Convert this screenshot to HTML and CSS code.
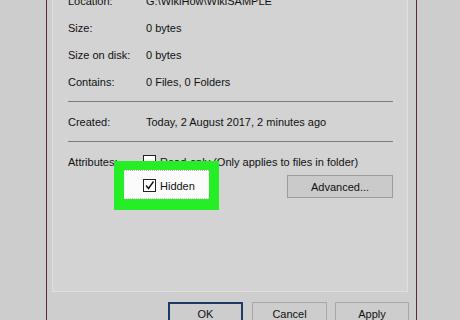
FILE: index.html
```html
<!DOCTYPE html>
<html lang="en">
<head>
    <meta charset="UTF-8">
    <title>WikiSAMPLE Properties</title>
    <link rel="stylesheet" href="styles.css">
</head>
<body>
<div class="window">
    <div class="panel">
        <div class="row"><span class="label">Location:</span><span>G:\WikiHow\WikiSAMPLE</span></div>
        <div class="row"><span class="label">Size:</span><span>0 bytes</span></div>
        <div class="row"><span class="label">Size on disk:</span><span>0 bytes</span></div>
        <div class="row"><span class="label">Contains:</span><span>0 Files, 0 Folders</span></div>

        <hr class="sep">

        <div class="row"><span class="label">Created:</span><span>Today, 2 August 2017, 2 minutes ago</span></div>

        <hr class="sep">

        <div class="row">
            <span class="label attr-label">Attributes:</span>
            <span class="check"></span>
            <span>Read-only (Only applies to files in folder)</span>
        </div>
        <div class="hidden-row">
            <label class="highlight">
                <span class="check">
                    <svg width="11" height="11" viewBox="0 0 11 11"><path d="M2 5.5 L4.5 8.5 L9.5 1.5" fill="none" stroke="#111" stroke-width="1.4"/></svg>
                </span>
                Hidden
            </label>
            <button class="btn advanced">Advanced...</button>
        </div>
    </div>

    <div class="actions">
        <button class="btn btn-ok">OK</button>
        <button class="btn btn-cancel">Cancel</button>
        <button class="btn btn-apply">Apply</button>
    </div>
</div>
</body>
</html>
```

FILE: styles.css
```css
body {
    margin: 0;
    padding: 0;
    background-color: #cdcdcd;
    font-family: "Liberation Sans", Arial, sans-serif;
    font-size: 11px;
    color: #111;
    overflow: hidden;
}
.window {
    margin-left: 46px;
    width: 356px;
    height: 360px;
    padding: 0 8px 0 5px;
    background-color: #cecece;
    border-left: 1px solid #5a2a3a;
    border-right: 1px solid #5a2a3a;
}
.panel {
    margin-top: -30px;
    padding: 16px 14px 92px 15px;
    background-color: #d3d3d3;
    border: 1px solid #dfdfdf;
}
.row {
    display: flex;
    align-items: center;
    height: 27px;
    white-space: nowrap;
}
.label {
    width: 78px;
    flex-shrink: 0;
}
.attr-label {
    width: 75px;
}
.sep {
    margin: 6px 0;
    border: none;
    height: 1px;
    background-color: #7d7d7d;
}
.check {
    display: inline-flex;
    align-items: center;
    justify-content: center;
    width: 11px;
    height: 11px;
    border: 1px solid #222;
    background-color: #fff;
    margin-right: 4px;
    flex-shrink: 0;
}

/* Строка с флажком Hidden и кнопкой Advanced */
.hidden-row {
    display: flex;
    align-items: flex-start;
    margin-top: -5px;
}
.highlight {
    position: relative;
    z-index: 1;
    display: flex;
    align-items: center;
    box-sizing: border-box;
    width: 85px;
    height: 29px;
    margin-left: 56px;
    padding: 2px 0 0 19px;
    background-color: #fbfbfb;
    border-top: 1px dotted #e2a6cc;
    border-bottom: 1px dotted #e6c6dc;
    box-shadow: 0 1px 0 10px #26ee26;
}
.btn {
    font-family: "Liberation Sans", Arial, sans-serif;
    font-size: 11px;
    color: #111;
    background-color: #cacaca;
    border: 1px solid #9c9c9c;
    height: 23px;
    padding: 0;
}
.advanced {
    margin-left: auto;
    margin-top: 5px;
    width: 106px;
}
.actions {
    display: flex;
    justify-content: flex-end;
    gap: 9px;
    margin-top: 10px;
    margin-right: -1px;
}
.actions .btn {
    width: 75px;
    background-color: #cdcdcd;
    border-color: #a8a8a8;
}
.actions .btn-ok {
    border: 2px solid #1d3a66;
}
.actions .btn-apply {
    width: 74px;
    margin-left: -1px;
}
```
